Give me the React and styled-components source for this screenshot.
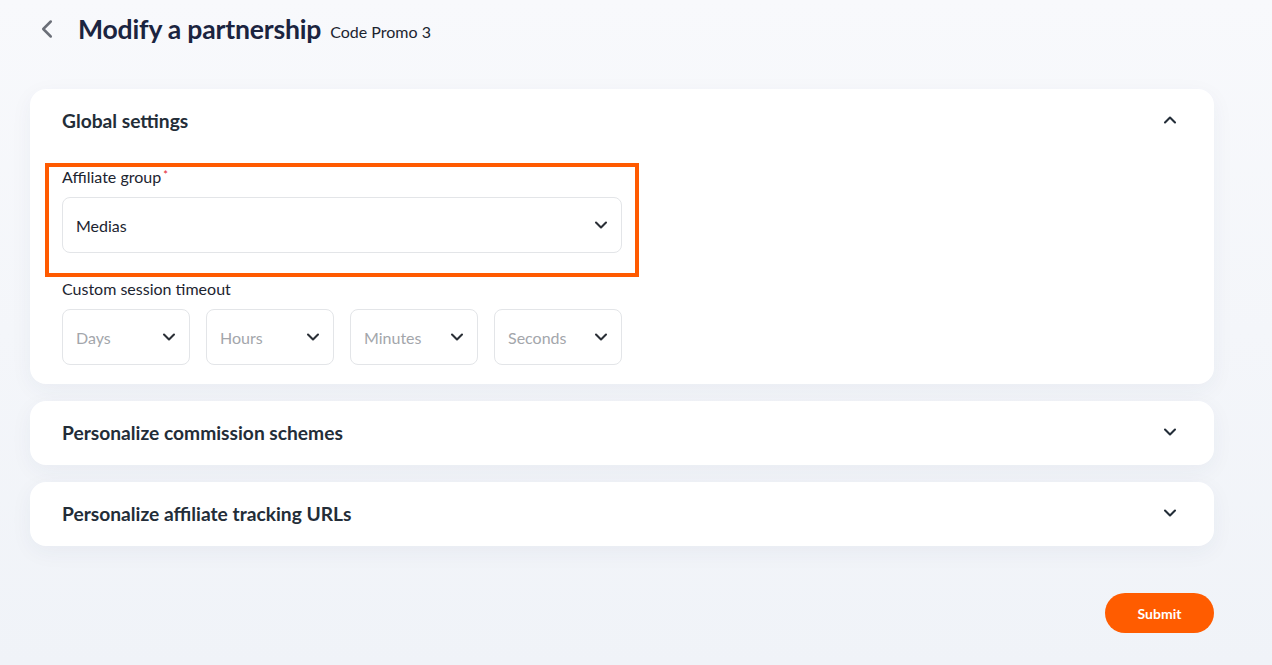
import React from "react";
import styled, { createGlobalStyle } from "styled-components";
import { ChevronDown, ChevronUp, ChevronLeft } from "lucide-react";

const GlobalStyle = createGlobalStyle`
  html, body { margin: 0; padding: 0; }
  body {
    font-family: Lato, "Open Sans", sans-serif;
    background: linear-gradient(180deg, #f8f9fc 0%, #f0f3f8 100%);
    min-height: 665px;
    color: #1c2430;
  }
  * { box-sizing: border-box; }
`;

const Page = styled.div`
  min-height: 665px;
  padding: 0 58px 32px 30px;
`;

const Header = styled.div`
  display: flex;
  align-items: center;
  height: 58px;
  padding-left: 2px;
`;

const BackButton = styled.button`
  border: none;
  background: none;
  padding: 0;
  width: 32px;
  display: flex;
  align-items: center;
  color: #6b6f78;
  cursor: pointer;
  margin-right: 14px;
`;

const Title = styled.h1`
  margin: 0;
  font-size: 26.6px;
  font-weight: 700;
  color: #1b2440;
  letter-spacing: -0.2px;
`;

const Subtitle = styled.span`
  margin-left: 9px;
  font-size: 16px;
  color: #1c2430;
  position: relative;
  top: 2px;
`;

const Sections = styled.div`
  display: flex;
  flex-direction: column;
  gap: 17px;
  margin-top: 31px;
`;

const Card = styled.section`
  background: #fff;
  border-radius: 16px;
  box-shadow: 0 6px 22px rgba(40, 60, 100, 0.05);
`;

const CardHeader = styled.div`
  display: flex;
  align-items: center;
  justify-content: space-between;
  height: 64px;
  padding: 0 34px 2px 32px;
  color: #232d38;
`;

const CardTitle = styled.h2`
  margin: 0;
  font-size: 19.2px;
  font-weight: 700;
  color: #232d38;
`;

const CardBody = styled.div`
  padding: 0 32px 19px;
`;

const Field = styled.div`
  position: relative;
  width: 560px;
  padding-top: 11px;
  padding-bottom: 27px;
`;

const Highlight = styled.div`
  position: absolute;
  left: -17px;
  right: -17px;
  top: 10px;
  bottom: 3px;
  border: 4px solid #ff5a00;
  pointer-events: none;
`;

const Label = styled.div`
  font-size: 16px;
  color: #1c2430;
  line-height: 18px;
  margin-bottom: 11px;
`;

const Required = styled.sup`
  color: #e4202a;
  font-size: 11px;
  margin-left: 2px;
  position: relative;
  top: 2px;
`;

const Select = styled.div`
  display: flex;
  align-items: center;
  justify-content: space-between;
  height: 56px;
  width: ${(p) => p.$width || "100%"};
  padding: 0 10px 0 13px;
  border: 1px solid #e3e5e8;
  border-radius: 8px;
  font-size: 16px;
  color: ${(p) => (p.$placeholder ? "#a3a6ab" : "#1c2430")};
  background: #fff;
  svg { color: #2a2f36; }
`;

const TimeoutRow = styled.div`
  display: flex;
  gap: 16px;
`;

const Footer = styled.div`
  display: flex;
  justify-content: flex-end;
  margin-top: 47px;
`;

const SubmitButton = styled.button`
  height: 40px;
  width: 109px;
  border: none;
  border-radius: 20px;
  background: #ff5c00;
  color: #fff;
  font-family: Lato, sans-serif;
  font-size: 14px;
  font-weight: 700;
  cursor: pointer;
`;

const Chevron = ({ up }) =>
  up ? <ChevronUp size={20} strokeWidth={2.5} /> : <ChevronDown size={20} strokeWidth={2.5} />;

export default function App() {
  const units = ["Days", "Hours", "Minutes", "Seconds"];
  return (
    <>
      <GlobalStyle />
      <Page>
        <Header>
          <BackButton aria-label="Back">
            <ChevronLeft size={30} strokeWidth={2} />
          </BackButton>
          <Title>Modify a partnership</Title>
          <Subtitle>Code Promo 3</Subtitle>
        </Header>

        <Sections>
          <Card>
            <CardHeader>
              <CardTitle>Global settings</CardTitle>
              <Chevron up />
            </CardHeader>
            <CardBody>
              <Field>
                <Highlight />
                <Label>
                  Affiliate group<Required>*</Required>
                </Label>
                <Select>
                  Medias
                  <Chevron />
                </Select>
              </Field>
              <Label>Custom session timeout</Label>
              <TimeoutRow>
                {units.map((u) => (
                  <Select key={u} $width="128px" $placeholder>
                    {u}
                    <Chevron />
                  </Select>
                ))}
              </TimeoutRow>
            </CardBody>
          </Card>

          <Card>
            <CardHeader>
              <CardTitle>Personalize commission schemes</CardTitle>
              <Chevron />
            </CardHeader>
          </Card>

          <Card>
            <CardHeader>
              <CardTitle>Personalize affiliate tracking URLs</CardTitle>
              <Chevron />
            </CardHeader>
          </Card>
        </Sections>

        <Footer>
          <SubmitButton>Submit</SubmitButton>
        </Footer>
      </Page>
    </>
  );
}
